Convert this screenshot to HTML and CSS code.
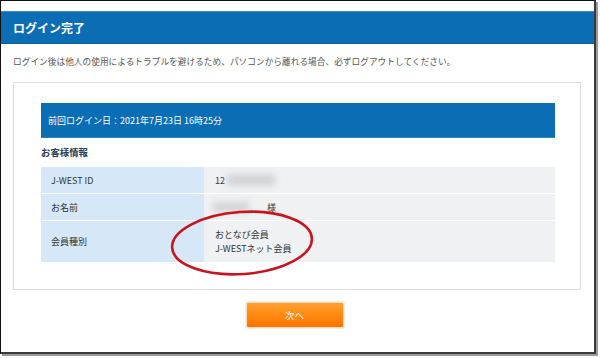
FILE: index.html
```html
<!DOCTYPE html>
<html lang="ja">
<head>
<meta charset="utf-8">
<link rel="stylesheet" href="styles.css">
</head>
<body>
<div class="frame">
  <div class="header">ログイン完了</div>
  <p class="notice">ログイン後は他人の使用によるトラブルを避けるため、パソコンから離れる場合、必ずログアウトしてください。</p>
  <div class="panel">
    <div class="lastlogin">前回ログイン日：2021年7月23日 16時25分</div>
    <div class="section-title">お客様情報</div>
    <div class="table">
      <div class="row r1">
        <div class="label">J-WEST ID</div>
        <div class="value"><span>12</span><span class="blur b1"></span></div>
      </div>
      <div class="row r2">
        <div class="label">お名前</div>
        <div class="value"><span class="blur b2"></span><span class="sama">様</span></div>
      </div>
      <div class="row r3">
        <div class="label">会員種別</div>
        <div class="value multi"><span>おとなび会員</span><span>J-WESTネット会員</span></div>
      </div>
    </div>
    <svg class="circle" width="150" height="72" viewBox="0 0 150 72">
      <ellipse cx="75" cy="36" rx="70" ry="31" fill="none" stroke="#c8141e" stroke-width="2.6" transform="rotate(-4 75 36)"/>
    </svg>
  </div>
  <div class="actions">
    <button class="next">次へ</button>
  </div>
</div>
</body>
</html>
```
FILE: styles.css
```css
* { box-sizing: border-box; }
html, body { margin: 0; padding: 0; background: #fff; }
body {
  font-family: "Noto Sans CJK JP", "Noto Sans", sans-serif;
  width: 600px;
  height: 358px;
  overflow: hidden;
}
.frame {
  width: 596px;
  height: 354px;
  border-left: 1px solid #111;
  border-top: 1px solid #111;
  border-right: 2px solid #3a3a3a;
  border-bottom: 2px solid #3a3a3a;
  box-shadow: 2px 2px 0 #9a9a9a;
  padding-top: 10px;
  background: #fff;
}
.header {
  height: 33px;
  background: #0b6db4;
  border-top: 1px solid #3d8ccb;
  border-bottom: 1px solid #0a5f9e;
  color: #fff;
  font-weight: bold;
  font-size: 12px;
  line-height: 31px;
  padding-left: 12px;
}
.notice {
  margin: 0;
  padding: 12px 0 0 12px;
  height: 38px;
  font-size: 8.7px;
  line-height: 12px;
  color: #555;
}
.panel {
  position: relative;
  margin-left: 12px;
  width: 568px;
  height: 208px;
  border: 1px solid #dcdcdc;
  padding: 20px 25px 0 27px;
}
.lastlogin {
  height: 35px;
  background: #0b6db4;
  border-bottom: 1px solid #2a80c0;
  color: #fff;
  font-size: 9px;
  line-height: 35px;
  padding-left: 7px;
}
.section-title {
  height: 29px;
  font-size: 9.4px;
  font-weight: bold;
  color: #2b3d55;
  line-height: 29px;
  padding-left: 0;
}
.table { display: flex; flex-direction: column; gap: 1px; }
.row { display: grid; grid-template-columns: 163px 1fr; }
.r1 { height: 26px; }
.r2 { height: 26px; }
.r3 { height: 41px; }
.label {
  background: #d6e8f8;
  font-size: 9px;
  color: #333;
  padding-left: 10px;
  display: flex;
  align-items: center;
}
.value {
  background: #f0f1f2;
  font-size: 9px;
  color: #333;
  padding-left: 11px;
  display: flex;
  align-items: center;
}
.value.multi {
  flex-direction: column;
  align-items: flex-start;
  justify-content: center;
  line-height: 14px;
}
.blur {
  display: inline-block;
  background: #d4d4d6;
  filter: blur(3px);
}
.b1 { width: 48px; height: 12px; margin-left: 2px; }
.b2 { width: 36px; height: 10px; margin-left: -2px; }
.sama { margin-left: 18px; }
.circle {
  position: absolute;
  left: 153px;
  top: 124px;
}
.actions {
  display: flex;
  justify-content: center;
  padding-top: 12px;
  padding-right: 6px;
}
.next {
  width: 98px;
  height: 26px;
  border: 1px solid #f3dcc0;
  border-radius: 2px;
  background: linear-gradient(#ffa032 0%, #ff8c14 45%, #ff7400 100%);
  color: #fff;
  font-family: "Noto Sans CJK JP", sans-serif;
  font-size: 9.5px;
  padding: 0;
  box-shadow: 0 0 0 1px #fbefe2;
}
```
